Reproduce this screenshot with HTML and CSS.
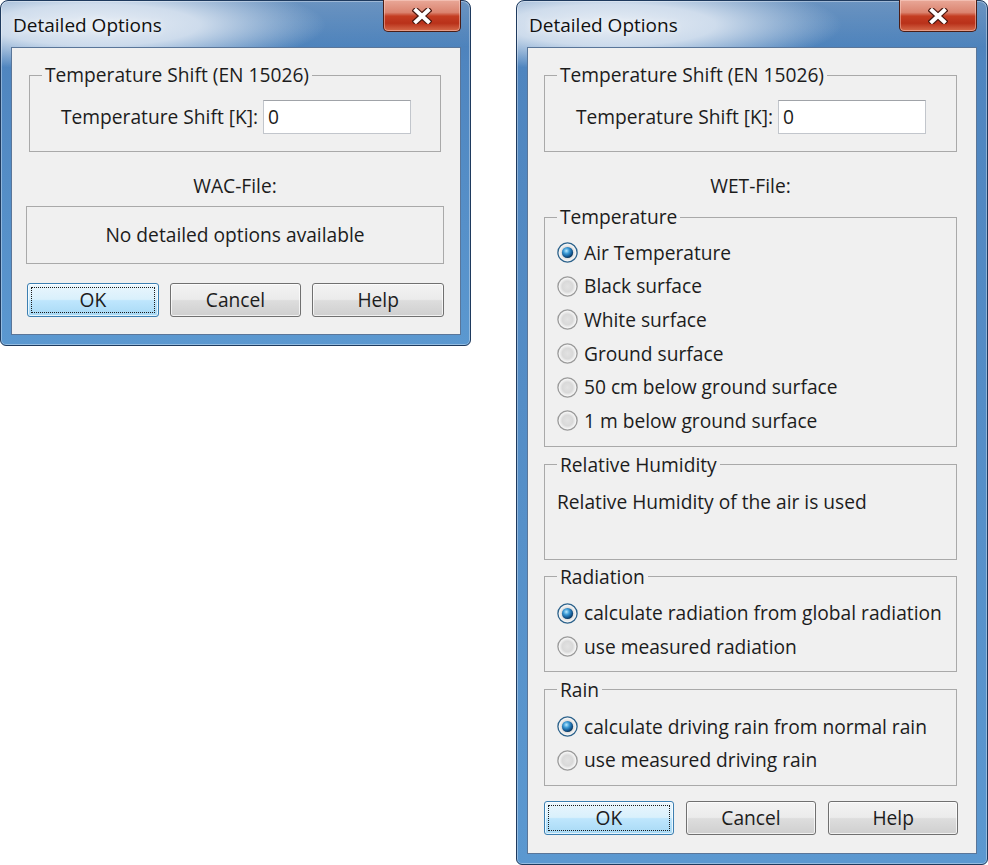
FILE: index.html
```html
<!DOCTYPE html>
<html>
<head>
<meta charset="utf-8">
<title>Detailed Options</title>
<link rel="stylesheet" href="styles.css">
</head>
<body>
<svg class="defs" width="0" height="0" aria-hidden="true">
  <defs>
    <radialGradient id="rOff" cx="50%" cy="50%" r="50%">
      <stop offset="0%" stop-color="#e2e2e2"/>
      <stop offset="55%" stop-color="#d9d9d9"/>
      <stop offset="85%" stop-color="#f4f4f4"/>
      <stop offset="100%" stop-color="#fafafa"/>
    </radialGradient>
    <radialGradient id="rDot" cx="40%" cy="35%" r="65%">
      <stop offset="0%" stop-color="#b9e9ff"/>
      <stop offset="40%" stop-color="#3b9ad6"/>
      <stop offset="80%" stop-color="#125690"/>
      <stop offset="100%" stop-color="#0c3558"/>
    </radialGradient>
  </defs>
</svg>
<div class="desk">
  <div class="win win-left">
    <div class="titlebar">
      <span class="title">Detailed Options</span>
      <div class="close">
        <svg width="20" height="16" viewBox="0 0 20 16"><path d="M4 2.5 L16 13.5 M16 2.5 L4 13.5" stroke="#4a1810" stroke-width="6.4" stroke-linecap="square" fill="none"/><path d="M4 2.5 L16 13.5 M16 2.5 L4 13.5" stroke="#ffffff" stroke-width="4" stroke-linecap="square" fill="none"/></svg>
      </div>
    </div>
    <div class="client">
      <fieldset class="group g-shift">
        <legend>Temperature Shift (EN 15026)</legend>
        <div class="field-row">
          <span class="field-label">Temperature Shift [K]:</span>
          <div class="textbox">0</div>
        </div>
      </fieldset>
      <div class="file-label">WAC-File:</div>
      <div class="info-box">No detailed options available</div>
      <div class="buttons b-left">
        <div class="btn btn-default"><span class="focus">OK</span></div>
        <div class="btn">Cancel</div>
        <div class="btn">Help</div>
      </div>
    </div>
  </div>

  <div class="win win-right">
    <div class="titlebar">
      <span class="title">Detailed Options</span>
      <div class="close">
        <svg width="20" height="16" viewBox="0 0 20 16"><path d="M4 2.5 L16 13.5 M16 2.5 L4 13.5" stroke="#4a1810" stroke-width="6.4" stroke-linecap="square" fill="none"/><path d="M4 2.5 L16 13.5 M16 2.5 L4 13.5" stroke="#ffffff" stroke-width="4" stroke-linecap="square" fill="none"/></svg>
      </div>
    </div>
    <div class="client client-right">
      <fieldset class="group g-shift">
        <legend>Temperature Shift (EN 15026)</legend>
        <div class="field-row">
          <span class="field-label">Temperature Shift [K]:</span>
          <div class="textbox">0</div>
        </div>
      </fieldset>
      <div class="file-label">WET-File:</div>

      <fieldset class="group g-radio g-temp">
        <legend>Temperature</legend>
        <div class="radio on"><svg width="21" height="21" viewBox="0 0 21 21"><circle cx="10.5" cy="10.5" r="9.6" fill="url(#rOff)" stroke="#2c628b" stroke-width="1.3"/><circle cx="10.5" cy="10.5" r="5.6" fill="url(#rDot)"/></svg><span>Air Temperature</span></div>
        <div class="radio"><svg width="21" height="21" viewBox="0 0 21 21"><circle cx="10.5" cy="10.5" r="9.6" fill="url(#rOff)" stroke="#9a9a9a" stroke-width="1.3"/></svg><span>Black surface</span></div>
        <div class="radio"><svg width="21" height="21" viewBox="0 0 21 21"><circle cx="10.5" cy="10.5" r="9.6" fill="url(#rOff)" stroke="#9a9a9a" stroke-width="1.3"/></svg><span>White surface</span></div>
        <div class="radio"><svg width="21" height="21" viewBox="0 0 21 21"><circle cx="10.5" cy="10.5" r="9.6" fill="url(#rOff)" stroke="#9a9a9a" stroke-width="1.3"/></svg><span>Ground surface</span></div>
        <div class="radio"><svg width="21" height="21" viewBox="0 0 21 21"><circle cx="10.5" cy="10.5" r="9.6" fill="url(#rOff)" stroke="#9a9a9a" stroke-width="1.3"/></svg><span>50 cm below ground surface</span></div>
        <div class="radio"><svg width="21" height="21" viewBox="0 0 21 21"><circle cx="10.5" cy="10.5" r="9.6" fill="url(#rOff)" stroke="#9a9a9a" stroke-width="1.3"/></svg><span>1 m below ground surface</span></div>
      </fieldset>

      <fieldset class="group g-text">
        <legend>Relative Humidity</legend>
        <div class="plain">Relative Humidity of the air is used</div>
      </fieldset>

      <fieldset class="group g-radio g-rad">
        <legend>Radiation</legend>
        <div class="radio on"><svg width="21" height="21" viewBox="0 0 21 21"><circle cx="10.5" cy="10.5" r="9.6" fill="url(#rOff)" stroke="#2c628b" stroke-width="1.3"/><circle cx="10.5" cy="10.5" r="5.6" fill="url(#rDot)"/></svg><span>calculate radiation from global radiation</span></div>
        <div class="radio"><svg width="21" height="21" viewBox="0 0 21 21"><circle cx="10.5" cy="10.5" r="9.6" fill="url(#rOff)" stroke="#9a9a9a" stroke-width="1.3"/></svg><span>use measured radiation</span></div>
      </fieldset>

      <fieldset class="group g-radio g-rain">
        <legend>Rain</legend>
        <div class="radio on"><svg width="21" height="21" viewBox="0 0 21 21"><circle cx="10.5" cy="10.5" r="9.6" fill="url(#rOff)" stroke="#2c628b" stroke-width="1.3"/><circle cx="10.5" cy="10.5" r="5.6" fill="url(#rDot)"/></svg><span>calculate driving rain from normal rain</span></div>
        <div class="radio"><svg width="21" height="21" viewBox="0 0 21 21"><circle cx="10.5" cy="10.5" r="9.6" fill="url(#rOff)" stroke="#9a9a9a" stroke-width="1.3"/></svg><span>use measured driving rain</span></div>
      </fieldset>

      <div class="buttons b-right">
        <div class="btn btn-default"><span class="focus">OK</span></div>
        <div class="btn">Cancel</div>
        <div class="btn">Help</div>
      </div>
    </div>
  </div>
</div>
</body>
</html>
```
FILE: styles.css
```css
html, body {
  margin: 0;
  background: #ffffff;
}
body {
  font-family: "Open Sans", "Noto Sans", sans-serif;
  font-size: 19.2px;
  line-height: 24px;
  color: #1c1c1c;
}
.defs {
  position: absolute;
  width: 0;
  height: 0;
}
.desk {
  display: flex;
  align-items: flex-start;
  gap: 45px;
}
.win {
  box-sizing: border-box;
  display: flex;
  flex-direction: column;
  padding: 0 9px 10px 10px;
  border: 1px solid #1e3a5e;
  border-radius: 8px 8px 6px 6px;
  box-shadow: inset 0 0 0 1px rgba(255, 255, 255, 0.35);
  background:
    radial-gradient(ellipse 230px 46px at 95px 24px, rgba(236, 241, 247, 0.97) 0%, rgba(226, 234, 244, 0.85) 45%, rgba(200, 216, 234, 0) 100%) no-repeat,
    linear-gradient(to bottom, rgba(255, 255, 255, 0.18) 0, rgba(255, 255, 255, 0) 46px),
    linear-gradient(to bottom, #4a7cb3 0, #4f85bf 60px, #5b98d0 100%);
}
.win-left {
  width: 471px;
  height: 346px;
}
.win-right {
  width: 472px;
  height: 865px;
  padding-right: 10px;
}
.titlebar {
  flex: none;
  height: 46px;
  display: flex;
  justify-content: space-between;
  align-items: flex-start;
}
.title {
  padding: 12px 0 0 2px;
  font-size: 19px;
  line-height: 24px;
  color: #101010;
  text-shadow: 0 0 6px rgba(255, 255, 255, 0.9);
}
.close {
  box-sizing: border-box;
  width: 78px;
  height: 32px;
  margin-top: -1px;
  display: flex;
  align-items: center;
  justify-content: center;
  border: 1px solid #4a1d16;
  border-top: none;
  border-radius: 0 0 5px 5px;
  box-shadow: inset 0 0 0 1px rgba(255, 220, 210, 0.45);
  background: linear-gradient(to bottom, #e9a898 0%, #db8470 40%, #c43d22 52%, #b9311a 75%, #d66b4b 100%);
}
.client {
  box-sizing: border-box;
  width: 450px;
  flex: 1;
  display: flex;
  flex-direction: column;
  padding: 0 19px 0 17px;
  border: 1px solid #5a7699;
  background: #f0f0f0;
}
.client > * {
  flex-shrink: 0;
}
.client-right {
  padding: 0 19px 0 16px;
}
.group {
  margin: 0;
  min-width: 0;
  padding: 0 12px;
  border: 1px solid #a9a9a9;
}
.group legend {
  padding: 0 3px;
  line-height: 24px;
}
.g-shift {
  margin-top: 15px;
  padding-top: 13px;
  padding-bottom: 17px;
}
.field-row {
  display: flex;
  align-items: center;
  gap: 5px;
  margin-left: 19px;
}
.textbox {
  box-sizing: border-box;
  width: 148px;
  height: 34px;
  padding-left: 4px;
  display: flex;
  align-items: center;
  background: #ffffff;
  border: 1px solid #c2c6cc;
  border-top-color: #a0a3a8;
}
.file-label {
  margin-top: 22px;
  text-align: center;
}
.info-box {
  box-sizing: border-box;
  height: 58px;
  margin: 8px -3px 0 -3px;
  display: flex;
  align-items: center;
  justify-content: center;
  border: 1px solid #a9a9a9;
}
.buttons {
  display: flex;
}
.b-left {
  margin: 19px -3px 0 -2px;
  gap: 11px;
}
.b-right {
  margin: 15px -1px 0 0;
  gap: 12.5px;
}
.btn {
  box-sizing: border-box;
  height: 34px;
  display: flex;
  align-items: center;
  justify-content: center;
  border: 1px solid #707070;
  border-radius: 3px;
  box-shadow: inset 0 0 0 1px rgba(255, 255, 255, 0.7);
  background: linear-gradient(to bottom, #f3f3f3 0%, #ebebeb 48%, #dddddd 52%, #cfcfcf 100%);
}
.b-left .btn {
  width: 132px;
}
.b-right .btn {
  width: 130px;
}
.btn-default {
  border-color: #3c7fb1;
  background: linear-gradient(to bottom, #eaf6fd 0%, #d9f0fc 48%, #bee6fd 52%, #a7d9f5 100%);
}
.focus {
  box-sizing: border-box;
  display: flex;
  align-items: center;
  justify-content: center;
  width: calc(100% - 6px);
  height: calc(100% - 6px);
  border: 1px dotted #1a1a1a;
}
.g-radio {
  padding-top: 7px;
  padding-bottom: 7px;
}
.g-temp {
  margin-top: 7px;
  padding-bottom: 8px;
}
.g-text {
  margin-top: 6px;
  padding-top: 13px;
  padding-bottom: 45px;
}
.g-rad {
  margin-top: 5px;
  padding-top: 8px;
}
.g-rain {
  margin-top: 6px;
  padding-top: 8px;
  padding-bottom: 8px;
}
.radio {
  height: 33.6px;
  display: flex;
  align-items: center;
  gap: 6px;
}
.radio svg {
  flex: none;
}
.plain {
  line-height: 24px;
}
```
